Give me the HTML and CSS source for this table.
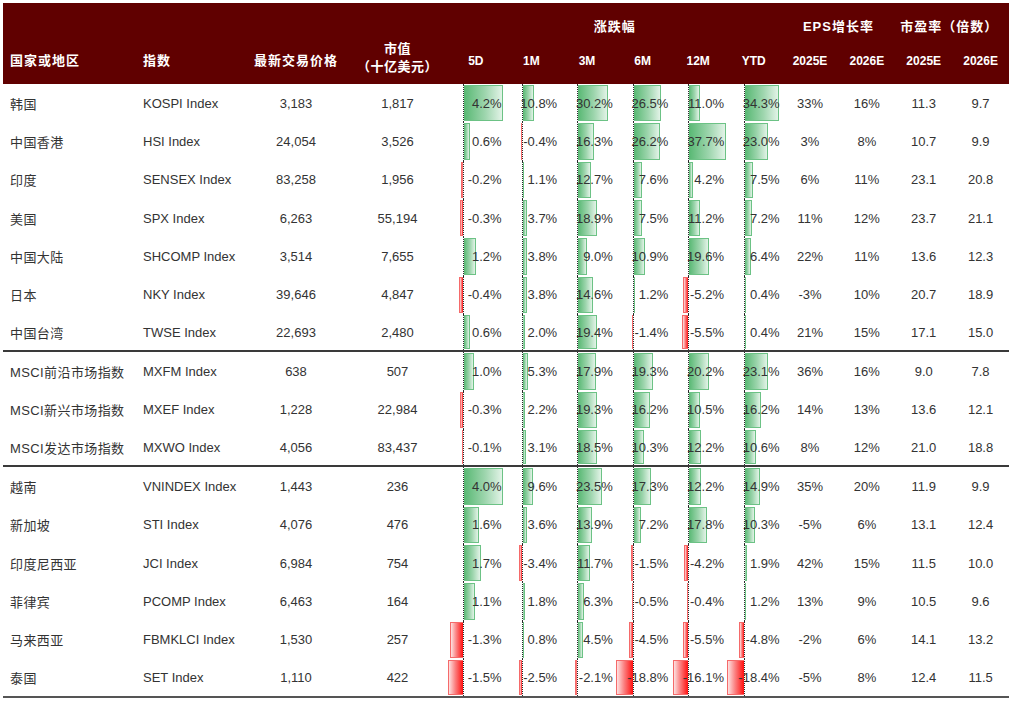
FILE: index.html
```html
<!DOCTYPE html>
<html lang="zh-CN">
<head>
<meta charset="utf-8">
<title>全球股指表现</title>
<link rel="stylesheet" href="styles.css">
</head>
<body>
<div class="table">
  <div class="thead">
    <div class="th h-country">国家或地区</div>
    <div class="th h-index">指数</div>
    <div class="th h-price">最新交易价格</div>
    <div class="th h-cap">市值<br>（十亿美元）</div>
    <div class="th g-chg">涨跌幅</div>
    <div class="th g-eps">EPS增长率</div>
    <div class="th g-pe">市盈率（倍数）</div>
    <div class="th sub">5D</div>
    <div class="th sub">1M</div>
    <div class="th sub">3M</div>
    <div class="th sub">6M</div>
    <div class="th sub">12M</div>
    <div class="th sub">YTD</div>
    <div class="th sub">2025E</div>
    <div class="th sub">2026E</div>
    <div class="th sub">2025E</div>
    <div class="th sub">2026E</div>
  </div>

  <div class="tbody">
    <div class="row">
      <div class="c name">韩国</div><div class="c idx">KOSPI Index</div><div class="c num">3,183</div><div class="c num">1,817</div>
      <div class="pct d5"><div class="bars"><span class="neg"></span><span class="pos"><i style="width:39px"></i></span></div><span class="val">4.2%</span></div>
      <div class="pct"><div class="bars"><span class="neg"></span><span class="pos"><i style="width:11px"></i></span></div><span class="val">10.8%</span></div>
      <div class="pct"><div class="bars"><span class="neg"></span><span class="pos"><i style="width:30px"></i></span></div><span class="val">30.2%</span></div>
      <div class="pct"><div class="bars"><span class="neg"></span><span class="pos"><i style="width:27px"></i></span></div><span class="val">26.5%</span></div>
      <div class="pct"><div class="bars"><span class="neg"></span><span class="pos"><i style="width:11px"></i></span></div><span class="val">11.0%</span></div>
      <div class="pct"><div class="bars"><span class="neg"></span><span class="pos"><i style="width:34px"></i></span></div><span class="val">34.3%</span></div>
      <div class="c num">33%</div><div class="c num">16%</div><div class="c num">11.3</div><div class="c num">9.7</div>
    </div>

    <div class="row">
      <div class="c name">中国香港</div><div class="c idx">HSI Index</div><div class="c num">24,054</div><div class="c num">3,526</div>
      <div class="pct d5"><div class="bars"><span class="neg"></span><span class="pos"><i style="width:6px"></i></span></div><span class="val">0.6%</span></div>
      <div class="pct"><div class="bars"><span class="neg"><i style="width:1px"></i></span><span class="pos"></span></div><span class="val">-0.4%</span></div>
      <div class="pct"><div class="bars"><span class="neg"></span><span class="pos"><i style="width:16px"></i></span></div><span class="val">16.3%</span></div>
      <div class="pct"><div class="bars"><span class="neg"></span><span class="pos"><i style="width:26px"></i></span></div><span class="val">26.2%</span></div>
      <div class="pct"><div class="bars"><span class="neg"></span><span class="pos"><i style="width:37px"></i></span></div><span class="val">37.7%</span></div>
      <div class="pct"><div class="bars"><span class="neg"></span><span class="pos"><i style="width:23px"></i></span></div><span class="val">23.0%</span></div>
      <div class="c num">3%</div><div class="c num">8%</div><div class="c num">10.7</div><div class="c num">9.9</div>
    </div>

    <div class="row">
      <div class="c name">印度</div><div class="c idx">SENSEX Index</div><div class="c num">83,258</div><div class="c num">1,956</div>
      <div class="pct d5"><div class="bars"><span class="neg"><i style="width:2px"></i></span><span class="pos"></span></div><span class="val">-0.2%</span></div>
      <div class="pct"><div class="bars"><span class="neg"></span><span class="pos"><i style="width:1px"></i></span></div><span class="val">1.1%</span></div>
      <div class="pct"><div class="bars"><span class="neg"></span><span class="pos"><i style="width:13px"></i></span></div><span class="val">12.7%</span></div>
      <div class="pct"><div class="bars"><span class="neg"></span><span class="pos"><i style="width:8px"></i></span></div><span class="val">7.6%</span></div>
      <div class="pct"><div class="bars"><span class="neg"></span><span class="pos"><i style="width:4px"></i></span></div><span class="val">4.2%</span></div>
      <div class="pct"><div class="bars"><span class="neg"></span><span class="pos"><i style="width:8px"></i></span></div><span class="val">7.5%</span></div>
      <div class="c num">6%</div><div class="c num">11%</div><div class="c num">23.1</div><div class="c num">20.8</div>
    </div>

    <div class="row">
      <div class="c name">美国</div><div class="c idx">SPX Index</div><div class="c num">6,263</div><div class="c num">55,194</div>
      <div class="pct d5"><div class="bars"><span class="neg"><i style="width:3px"></i></span><span class="pos"></span></div><span class="val">-0.3%</span></div>
      <div class="pct"><div class="bars"><span class="neg"></span><span class="pos"><i style="width:4px"></i></span></div><span class="val">3.7%</span></div>
      <div class="pct"><div class="bars"><span class="neg"></span><span class="pos"><i style="width:19px"></i></span></div><span class="val">18.9%</span></div>
      <div class="pct"><div class="bars"><span class="neg"></span><span class="pos"><i style="width:8px"></i></span></div><span class="val">7.5%</span></div>
      <div class="pct"><div class="bars"><span class="neg"></span><span class="pos"><i style="width:11px"></i></span></div><span class="val">11.2%</span></div>
      <div class="pct"><div class="bars"><span class="neg"></span><span class="pos"><i style="width:7px"></i></span></div><span class="val">7.2%</span></div>
      <div class="c num">11%</div><div class="c num">12%</div><div class="c num">23.7</div><div class="c num">21.1</div>
    </div>

    <div class="row">
      <div class="c name">中国大陆</div><div class="c idx">SHCOMP Index</div><div class="c num">3,514</div><div class="c num">7,655</div>
      <div class="pct d5"><div class="bars"><span class="neg"></span><span class="pos"><i style="width:12px"></i></span></div><span class="val">1.2%</span></div>
      <div class="pct"><div class="bars"><span class="neg"></span><span class="pos"><i style="width:4px"></i></span></div><span class="val">3.8%</span></div>
      <div class="pct"><div class="bars"><span class="neg"></span><span class="pos"><i style="width:9px"></i></span></div><span class="val">9.0%</span></div>
      <div class="pct"><div class="bars"><span class="neg"></span><span class="pos"><i style="width:11px"></i></span></div><span class="val">10.9%</span></div>
      <div class="pct"><div class="bars"><span class="neg"></span><span class="pos"><i style="width:20px"></i></span></div><span class="val">19.6%</span></div>
      <div class="pct"><div class="bars"><span class="neg"></span><span class="pos"><i style="width:6px"></i></span></div><span class="val">6.4%</span></div>
      <div class="c num">22%</div><div class="c num">11%</div><div class="c num">13.6</div><div class="c num">12.3</div>
    </div>

    <div class="row">
      <div class="c name">日本</div><div class="c idx">NKY Index</div><div class="c num">39,646</div><div class="c num">4,847</div>
      <div class="pct d5"><div class="bars"><span class="neg"><i style="width:4px"></i></span><span class="pos"></span></div><span class="val">-0.4%</span></div>
      <div class="pct"><div class="bars"><span class="neg"></span><span class="pos"><i style="width:4px"></i></span></div><span class="val">3.8%</span></div>
      <div class="pct"><div class="bars"><span class="neg"></span><span class="pos"><i style="width:15px"></i></span></div><span class="val">14.6%</span></div>
      <div class="pct"><div class="bars"><span class="neg"></span><span class="pos"><i style="width:1px"></i></span></div><span class="val">1.2%</span></div>
      <div class="pct"><div class="bars"><span class="neg"><i style="width:5px"></i></span><span class="pos"></span></div><span class="val">-5.2%</span></div>
      <div class="pct"><div class="bars"><span class="neg"></span><span class="pos"><i style="width:1px"></i></span></div><span class="val">0.4%</span></div>
      <div class="c num">-3%</div><div class="c num">10%</div><div class="c num">20.7</div><div class="c num">18.9</div>
    </div>

    <div class="row sep">
      <div class="c name">中国台湾</div><div class="c idx">TWSE Index</div><div class="c num">22,693</div><div class="c num">2,480</div>
      <div class="pct d5"><div class="bars"><span class="neg"></span><span class="pos"><i style="width:6px"></i></span></div><span class="val">0.6%</span></div>
      <div class="pct"><div class="bars"><span class="neg"></span><span class="pos"><i style="width:2px"></i></span></div><span class="val">2.0%</span></div>
      <div class="pct"><div class="bars"><span class="neg"></span><span class="pos"><i style="width:19px"></i></span></div><span class="val">19.4%</span></div>
      <div class="pct"><div class="bars"><span class="neg"><i style="width:1px"></i></span><span class="pos"></span></div><span class="val">-1.4%</span></div>
      <div class="pct"><div class="bars"><span class="neg"><i style="width:6px"></i></span><span class="pos"></span></div><span class="val">-5.5%</span></div>
      <div class="pct"><div class="bars"><span class="neg"></span><span class="pos"><i style="width:1px"></i></span></div><span class="val">0.4%</span></div>
      <div class="c num">21%</div><div class="c num">15%</div><div class="c num">17.1</div><div class="c num">15.0</div>
    </div>

    <div class="row">
      <div class="c name">MSCI前沿市场指数</div><div class="c idx">MXFM Index</div><div class="c num">638</div><div class="c num">507</div>
      <div class="pct d5"><div class="bars"><span class="neg"></span><span class="pos"><i style="width:10px"></i></span></div><span class="val">1.0%</span></div>
      <div class="pct"><div class="bars"><span class="neg"></span><span class="pos"><i style="width:5px"></i></span></div><span class="val">5.3%</span></div>
      <div class="pct"><div class="bars"><span class="neg"></span><span class="pos"><i style="width:18px"></i></span></div><span class="val">17.9%</span></div>
      <div class="pct"><div class="bars"><span class="neg"></span><span class="pos"><i style="width:19px"></i></span></div><span class="val">19.3%</span></div>
      <div class="pct"><div class="bars"><span class="neg"></span><span class="pos"><i style="width:20px"></i></span></div><span class="val">20.2%</span></div>
      <div class="pct"><div class="bars"><span class="neg"></span><span class="pos"><i style="width:23px"></i></span></div><span class="val">23.1%</span></div>
      <div class="c num">36%</div><div class="c num">16%</div><div class="c num">9.0</div><div class="c num">7.8</div>
    </div>

    <div class="row">
      <div class="c name">MSCI新兴市场指数</div><div class="c idx">MXEF Index</div><div class="c num">1,228</div><div class="c num">22,984</div>
      <div class="pct d5"><div class="bars"><span class="neg"><i style="width:3px"></i></span><span class="pos"></span></div><span class="val">-0.3%</span></div>
      <div class="pct"><div class="bars"><span class="neg"></span><span class="pos"><i style="width:2px"></i></span></div><span class="val">2.2%</span></div>
      <div class="pct"><div class="bars"><span class="neg"></span><span class="pos"><i style="width:19px"></i></span></div><span class="val">19.3%</span></div>
      <div class="pct"><div class="bars"><span class="neg"></span><span class="pos"><i style="width:16px"></i></span></div><span class="val">16.2%</span></div>
      <div class="pct"><div class="bars"><span class="neg"></span><span class="pos"><i style="width:11px"></i></span></div><span class="val">10.5%</span></div>
      <div class="pct"><div class="bars"><span class="neg"></span><span class="pos"><i style="width:16px"></i></span></div><span class="val">16.2%</span></div>
      <div class="c num">14%</div><div class="c num">13%</div><div class="c num">13.6</div><div class="c num">12.1</div>
    </div>

    <div class="row sep">
      <div class="c name">MSCI发达市场指数</div><div class="c idx">MXWO Index</div><div class="c num">4,056</div><div class="c num">83,437</div>
      <div class="pct d5"><div class="bars"><span class="neg"><i style="width:1px"></i></span><span class="pos"></span></div><span class="val">-0.1%</span></div>
      <div class="pct"><div class="bars"><span class="neg"></span><span class="pos"><i style="width:3px"></i></span></div><span class="val">3.1%</span></div>
      <div class="pct"><div class="bars"><span class="neg"></span><span class="pos"><i style="width:19px"></i></span></div><span class="val">18.5%</span></div>
      <div class="pct"><div class="bars"><span class="neg"></span><span class="pos"><i style="width:10px"></i></span></div><span class="val">10.3%</span></div>
      <div class="pct"><div class="bars"><span class="neg"></span><span class="pos"><i style="width:12px"></i></span></div><span class="val">12.2%</span></div>
      <div class="pct"><div class="bars"><span class="neg"></span><span class="pos"><i style="width:11px"></i></span></div><span class="val">10.6%</span></div>
      <div class="c num">8%</div><div class="c num">12%</div><div class="c num">21.0</div><div class="c num">18.8</div>
    </div>

    <div class="row">
      <div class="c name">越南</div><div class="c idx">VNINDEX Index</div><div class="c num">1,443</div><div class="c num">236</div>
      <div class="pct d5"><div class="bars"><span class="neg"></span><span class="pos"><i style="width:39px"></i></span></div><span class="val">4.0%</span></div>
      <div class="pct"><div class="bars"><span class="neg"></span><span class="pos"><i style="width:10px"></i></span></div><span class="val">9.6%</span></div>
      <div class="pct"><div class="bars"><span class="neg"></span><span class="pos"><i style="width:24px"></i></span></div><span class="val">23.5%</span></div>
      <div class="pct"><div class="bars"><span class="neg"></span><span class="pos"><i style="width:17px"></i></span></div><span class="val">17.3%</span></div>
      <div class="pct"><div class="bars"><span class="neg"></span><span class="pos"><i style="width:12px"></i></span></div><span class="val">12.2%</span></div>
      <div class="pct"><div class="bars"><span class="neg"></span><span class="pos"><i style="width:15px"></i></span></div><span class="val">14.9%</span></div>
      <div class="c num">35%</div><div class="c num">20%</div><div class="c num">11.9</div><div class="c num">9.9</div>
    </div>

    <div class="row">
      <div class="c name">新加坡</div><div class="c idx">STI Index</div><div class="c num">4,076</div><div class="c num">476</div>
      <div class="pct d5"><div class="bars"><span class="neg"></span><span class="pos"><i style="width:15px"></i></span></div><span class="val">1.6%</span></div>
      <div class="pct"><div class="bars"><span class="neg"></span><span class="pos"><i style="width:4px"></i></span></div><span class="val">3.6%</span></div>
      <div class="pct"><div class="bars"><span class="neg"></span><span class="pos"><i style="width:14px"></i></span></div><span class="val">13.9%</span></div>
      <div class="pct"><div class="bars"><span class="neg"></span><span class="pos"><i style="width:7px"></i></span></div><span class="val">7.2%</span></div>
      <div class="pct"><div class="bars"><span class="neg"></span><span class="pos"><i style="width:18px"></i></span></div><span class="val">17.8%</span></div>
      <div class="pct"><div class="bars"><span class="neg"></span><span class="pos"><i style="width:10px"></i></span></div><span class="val">10.3%</span></div>
      <div class="c num">-5%</div><div class="c num">6%</div><div class="c num">13.1</div><div class="c num">12.4</div>
    </div>

    <div class="row">
      <div class="c name">印度尼西亚</div><div class="c idx">JCI Index</div><div class="c num">6,984</div><div class="c num">754</div>
      <div class="pct d5"><div class="bars"><span class="neg"></span><span class="pos"><i style="width:17px"></i></span></div><span class="val">1.7%</span></div>
      <div class="pct"><div class="bars"><span class="neg"><i style="width:3px"></i></span><span class="pos"></span></div><span class="val">-3.4%</span></div>
      <div class="pct"><div class="bars"><span class="neg"></span><span class="pos"><i style="width:12px"></i></span></div><span class="val">11.7%</span></div>
      <div class="pct"><div class="bars"><span class="neg"><i style="width:2px"></i></span><span class="pos"></span></div><span class="val">-1.5%</span></div>
      <div class="pct"><div class="bars"><span class="neg"><i style="width:4px"></i></span><span class="pos"></span></div><span class="val">-4.2%</span></div>
      <div class="pct"><div class="bars"><span class="neg"></span><span class="pos"><i style="width:2px"></i></span></div><span class="val">1.9%</span></div>
      <div class="c num">42%</div><div class="c num">15%</div><div class="c num">11.5</div><div class="c num">10.0</div>
    </div>

    <div class="row">
      <div class="c name">菲律宾</div><div class="c idx">PCOMP Index</div><div class="c num">6,463</div><div class="c num">164</div>
      <div class="pct d5"><div class="bars"><span class="neg"></span><span class="pos"><i style="width:11px"></i></span></div><span class="val">1.1%</span></div>
      <div class="pct"><div class="bars"><span class="neg"></span><span class="pos"><i style="width:2px"></i></span></div><span class="val">1.8%</span></div>
      <div class="pct"><div class="bars"><span class="neg"></span><span class="pos"><i style="width:6px"></i></span></div><span class="val">6.3%</span></div>
      <div class="pct"><div class="bars"><span class="neg"><i style="width:1px"></i></span><span class="pos"></span></div><span class="val">-0.5%</span></div>
      <div class="pct"><div class="bars"><span class="neg"><i style="width:1px"></i></span><span class="pos"></span></div><span class="val">-0.4%</span></div>
      <div class="pct"><div class="bars"><span class="neg"></span><span class="pos"><i style="width:1px"></i></span></div><span class="val">1.2%</span></div>
      <div class="c num">13%</div><div class="c num">9%</div><div class="c num">10.5</div><div class="c num">9.6</div>
    </div>

    <div class="row">
      <div class="c name">马来西亚</div><div class="c idx">FBMKLCI Index</div><div class="c num">1,530</div><div class="c num">257</div>
      <div class="pct d5"><div class="bars"><span class="neg"><i style="width:13px"></i></span><span class="pos"></span></div><span class="val">-1.3%</span></div>
      <div class="pct"><div class="bars"><span class="neg"></span><span class="pos"><i style="width:1px"></i></span></div><span class="val">0.8%</span></div>
      <div class="pct"><div class="bars"><span class="neg"></span><span class="pos"><i style="width:5px"></i></span></div><span class="val">4.5%</span></div>
      <div class="pct"><div class="bars"><span class="neg"><i style="width:4px"></i></span><span class="pos"></span></div><span class="val">-4.5%</span></div>
      <div class="pct"><div class="bars"><span class="neg"><i style="width:5px"></i></span><span class="pos"></span></div><span class="val">-5.5%</span></div>
      <div class="pct"><div class="bars"><span class="neg"><i style="width:5px"></i></span><span class="pos"></span></div><span class="val">-4.8%</span></div>
      <div class="c num">-2%</div><div class="c num">6%</div><div class="c num">14.1</div><div class="c num">13.2</div>
    </div>

    <div class="row last">
      <div class="c name">泰国</div><div class="c idx">SET Index</div><div class="c num">1,110</div><div class="c num">422</div>
      <div class="pct d5"><div class="bars"><span class="neg"><i style="width:15px"></i></span><span class="pos"></span></div><span class="val">-1.5%</span></div>
      <div class="pct"><div class="bars"><span class="neg"><i style="width:3px"></i></span><span class="pos"></span></div><span class="val">-2.5%</span></div>
      <div class="pct"><div class="bars"><span class="neg"><i style="width:2px"></i></span><span class="pos"></span></div><span class="val">-2.1%</span></div>
      <div class="pct"><div class="bars"><span class="neg"><i style="width:17px"></i></span><span class="pos"></span></div><span class="val">-18.8%</span></div>
      <div class="pct"><div class="bars"><span class="neg"><i style="width:15px"></i></span><span class="pos"></span></div><span class="val">-16.1%</span></div>
      <div class="pct"><div class="bars"><span class="neg"><i style="width:17px"></i></span><span class="pos"></span></div><span class="val">-18.4%</span></div>
      <div class="c num">-5%</div><div class="c num">8%</div><div class="c num">12.4</div><div class="c num">11.5</div>
    </div>
  </div>
</div>
</body>
</html>
```

FILE: styles.css
```css
html, body {
  margin: 0;
  padding: 0;
  background: #ffffff;
}

body {
  font-family: "Liberation Sans", "Noto Sans CJK SC", Arial, sans-serif;
  font-size: 13px;
  color: #333333;
}

.table {
  --cols: 133px 109px 102px 101px repeat(6, 55.6px) repeat(4, 1fr);
  width: 1006px;
  margin: 3px 0 0 3px;
}

/* ---------- header ---------- */
.thead {
  display: grid;
  grid-template-columns: var(--cols);
  grid-template-rows: 40px 41px;
  background: #600000;
  color: #ffffff;
  font-weight: 700;
}

.th {
  line-height: 18px;
  white-space: nowrap;
}

.h-country,
.h-index,
.h-price {
  grid-row: 2;
  padding-top: 9px;
  font-size: 13px;
  letter-spacing: 1px;
}

.h-country { grid-column: 1; padding-left: 7px; }
.h-index { grid-column: 2; padding-left: 7px; }
.h-price { grid-column: 3; text-align: center; }

.h-cap {
  grid-column: 4;
  grid-row: 1 / 3;
  padding-top: 37px;
  text-align: center;
  letter-spacing: 0.5px;
}

.g-chg,
.g-eps,
.g-pe {
  grid-row: 1;
  padding-top: 15px;
  text-align: center;
  letter-spacing: 1px;
}

.g-chg { grid-column: 5 / 11; }
.g-eps { grid-column: 11 / 13; }
.g-pe { grid-column: 13 / 15; padding-right: 6px; }

.sub {
  grid-row: 2;
  padding-top: 9px;
  font-size: 12px;
  text-align: center;
}

/* ---------- body ---------- */
.tbody {
  display: grid;
  grid-auto-rows: 38.35px;
}

.row {
  display: grid;
  grid-template-columns: var(--cols);
  box-sizing: border-box;
}

.row.sep {
  border-bottom: 2px solid #3a3a3a;
}

.row.last {
  border-bottom: 2px solid #555555;
}

.c {
  display: flex;
  align-items: center;
  white-space: nowrap;
}

.name {
  padding-left: 7px;
  letter-spacing: 0.4px;
}

.idx {
  padding-left: 7px;
}

.num {
  justify-content: center;
}

/* ---------- data bar cells ---------- */
.pct {
  display: grid;
  min-width: 0;
}

.pct > * {
  grid-area: 1 / 1;
}

.bars {
  display: flex;
  align-items: stretch;
}

.neg {
  width: 18px;
  flex: none;
  display: flex;
  justify-content: flex-end;
  border-right: 1px dotted #2a2a2a;
}

.d5 .neg {
  width: 15px;
}

.pos {
  flex: 1;
  display: flex;
}

.bars i {
  display: block;
  margin: 1px 0;
  box-sizing: border-box;
}

.pos i {
  background: linear-gradient(to right, #58b873 0%, #9dd5ad 55%, #e2f3e7 100%);
  border: 1px solid #6cc285;
  border-left: none;
}

.neg i {
  background: linear-gradient(to left, #ff1010 0%, #fb7f7f 55%, #fde2e2 100%);
  border: 1px solid #f56a6a;
  border-right: none;
}

.val {
  align-self: center;
  justify-self: end;
  padding-right: 2px;
  white-space: nowrap;
}
```
